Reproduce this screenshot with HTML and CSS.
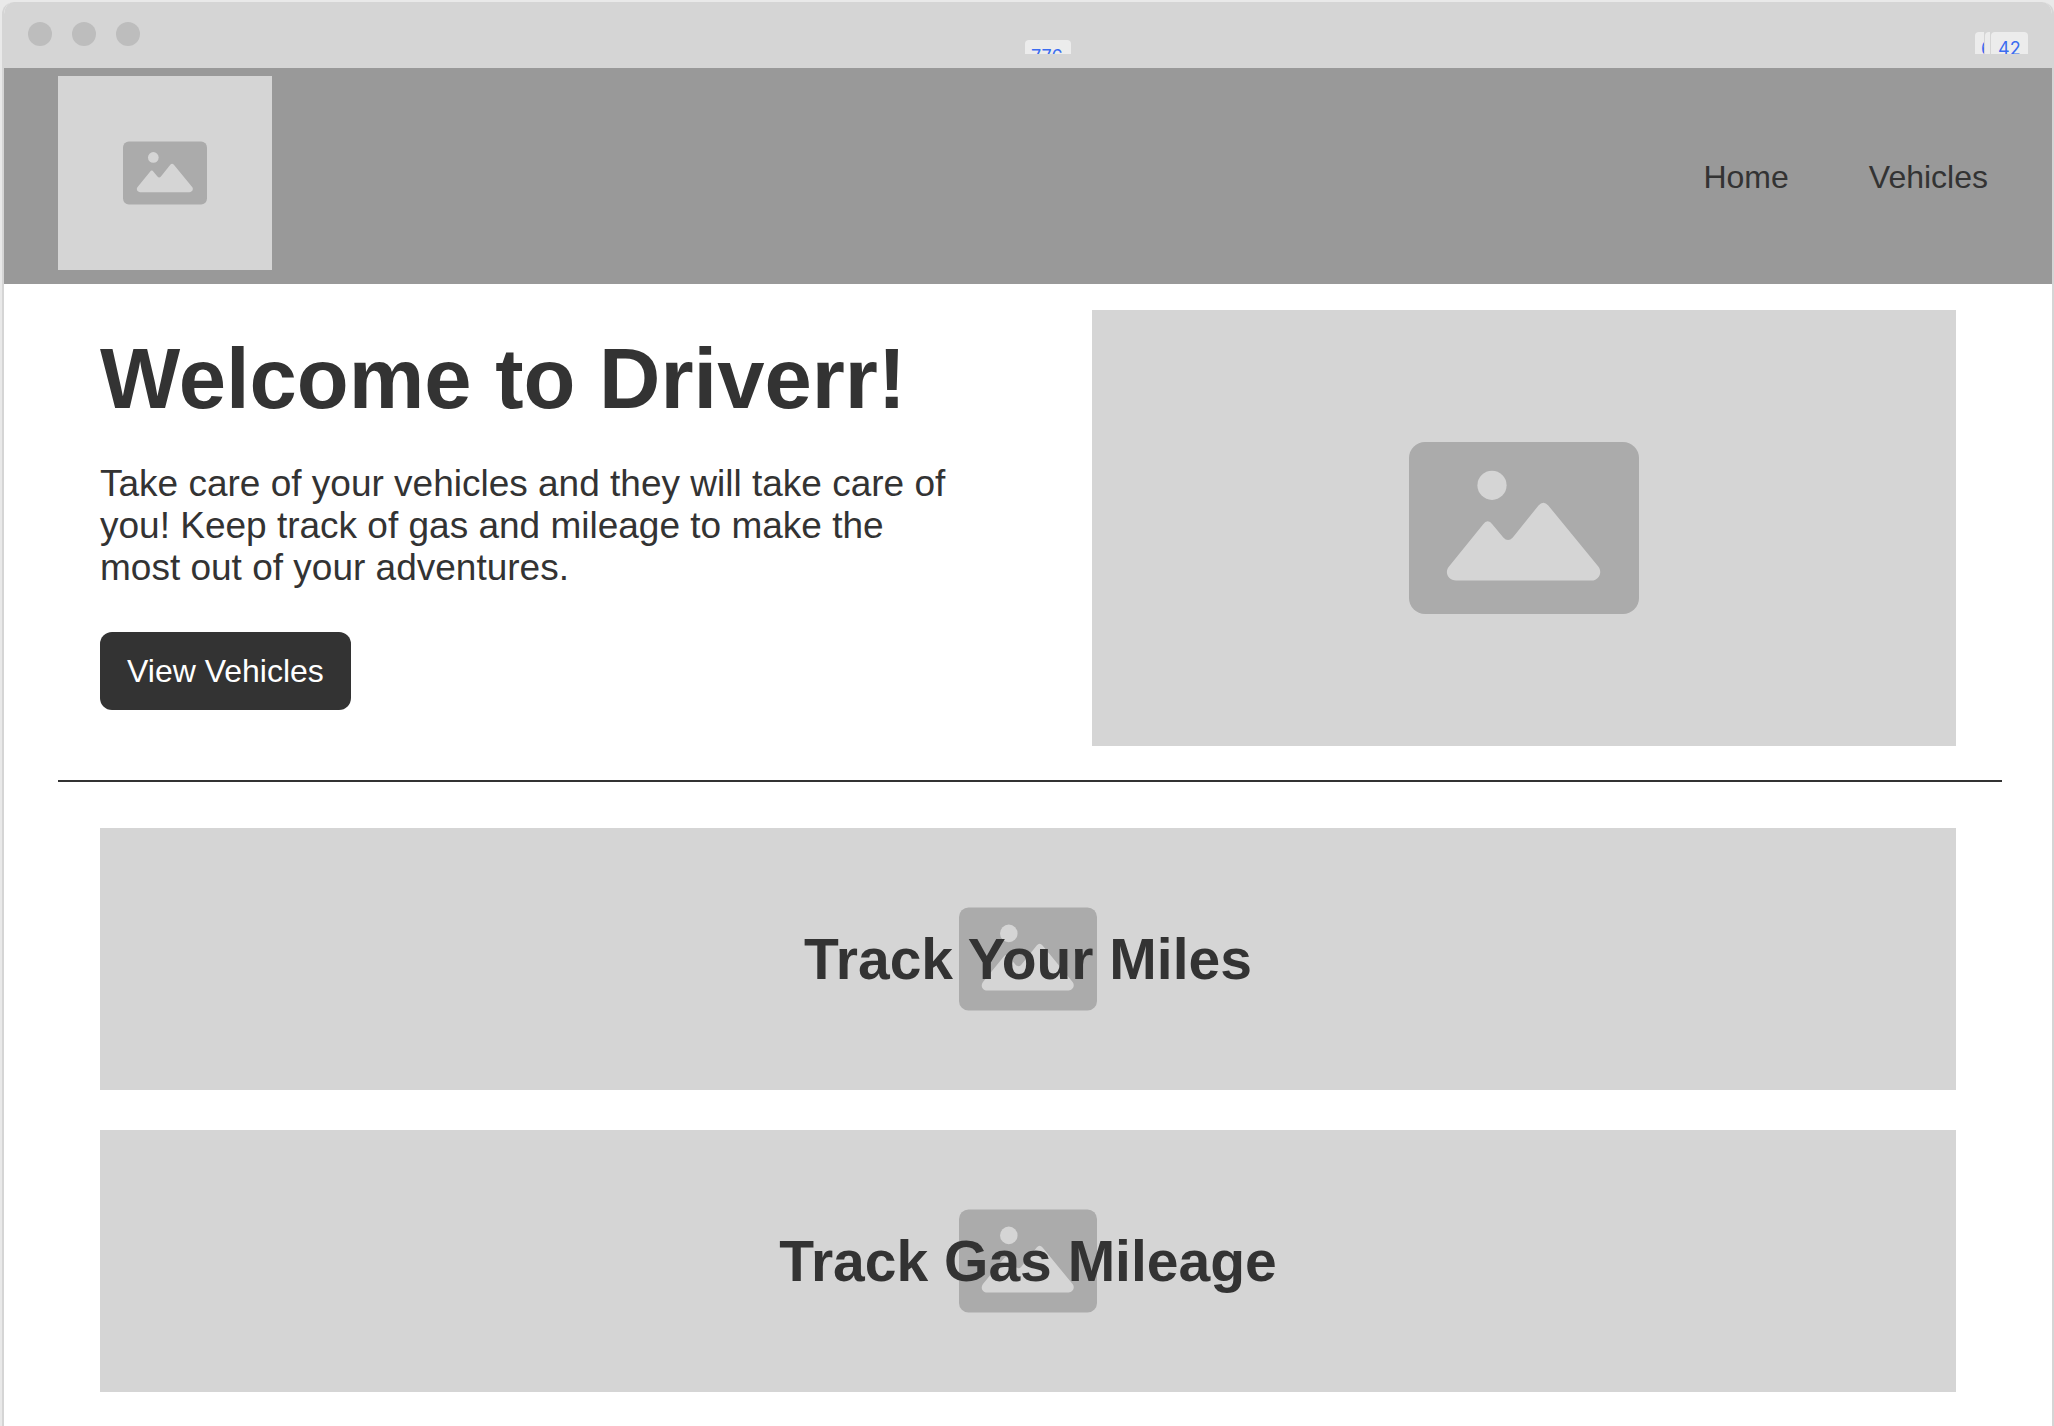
FILE: index.html
```html
<!DOCTYPE html>
<html lang="en">
<head>
<meta charset="utf-8">
<meta name="viewport" content="width=device-width, initial-scale=1">
<title>Driverr</title>
<link rel="stylesheet" href="styles.css">
</head>
<body>
<svg class="defs" aria-hidden="true">
  <symbol id="picture" viewBox="0 0 230 172">
    <rect width="230" height="172" rx="16" fill="#ababab"/>
    <circle cx="83" cy="43.3" r="14.6" fill="#d5d5d5"/>
    <path fill="#d5d5d5" d="M40 124.500 L74 82.500 Q78.700 76 83.500 82.500 L94.300 95.500 Q99 100.500 103.800 95.500 L129.500 63.500 Q134.300 58 139.300 63.500 L189.300 124.500 C194 130.500 189.500 138.500 182.500 138.500 L47 138.500 C39.500 138.500 35 130.500 40 124.500 Z"/>
  </symbol>
</svg>
<div class="window">
  <div class="titlebar">
    <span class="dot"></span><span class="dot"></span><span class="dot"></span>
    <div class="measures">
      <span class="measure measure-center">776</span>
      <span class="measure measure-first">64</span>
      <span class="measure measure-second"></span>
      <span class="measure measure-last">42</span>
    </div>
  </div>
  <header class="header">
    <div class="logo"><svg class="logo-icon" role="img" aria-label="Logo"><use href="#picture"/></svg></div>
    <nav class="nav">
      <a href="#home">Home</a>
      <a href="#vehicles">Vehicles</a>
    </nav>
  </header>
  <main>
    <section class="hero">
      <div class="intro">
        <h1>Welcome to Driverr!</h1>
        <p>Take care of your vehicles and they will take care of you! Keep track of gas and mileage to make the most out of your adventures.</p>
        <button class="action" type="button">View Vehicles</button>
      </div>
      <div class="hero-picture"><svg class="hero-icon" aria-hidden="true"><use href="#picture"/></svg></div>
    </section>
    <hr class="divider">
    <section class="features">
      <article class="feature">
        <svg class="feature-icon" aria-hidden="true"><use href="#picture"/></svg>
        <h2>Track Your Miles</h2>
      </article>
      <article class="feature">
        <svg class="feature-icon" aria-hidden="true"><use href="#picture"/></svg>
        <h2>Track Gas Mileage</h2>
      </article>
    </section>
  </main>
</div>
</body>
</html>
```
FILE: styles.css
```css
* {
  box-sizing: border-box;
}

body {
  margin: 0;
  padding: 2px 0 0 2px;
  background: #e9e9e9;
  color: #333;
  font-family: "Liberation Sans", Arial, sans-serif;
}

h1,
h2,
p {
  margin: 0;
}

.defs {
  display: none;
}

.window {
  min-height: calc(100vh - 2px);
  border: 2px solid #d5d5d5;
  border-width: 0 2px;
  border-radius: 12px 12px 0 0;
  background: #fff;
  overflow: hidden;
}

.titlebar {
  position: relative;
  display: flex;
  align-items: center;
  gap: 20px;
  height: 66px;
  padding: 0 24px 2px;
  background: #d5d5d5;
}

.dot {
  width: 24px;
  height: 24px;
  border-radius: 50%;
  background: #bdbdbd;
}

/* Spacing labels lie over the title bar and are cut off at its inner edge. */
.measures {
  position: absolute;
  inset: 0 0 14px;
  overflow: hidden;
}

.measure {
  position: absolute;
  top: 30px;
  height: 30px;
  padding: 0 6px;
  border-radius: 4px;
  background: #ececec;
  color: #3b6cf0;
  font: 18px/34px Inter, sans-serif;
  overflow: hidden;
}

.measure-center {
  top: 38px;
  left: calc(50% - 3px);
  width: 46px;
}

.measure-first {
  right: 68px;
  width: 9px;
  padding-right: 0;
  border-radius: 4px 0 0;
}

.measure-second {
  right: 62px;
  width: 5px;
  padding: 0;
  border-radius: 4px 0 0;
}

.measure-last {
  right: 24px;
  width: 37px;
  padding: 0 7px;
}

.header {
  display: flex;
  align-items: center;
  justify-content: space-between;
  padding: 8px 64px 14px 54px;
  background: #999;
}

.logo {
  display: grid;
  place-items: center;
  width: 214px;
  height: 194px;
  background: #d5d5d5;
}

.logo-icon {
  width: 84px;
  height: 64px;
}

.nav {
  display: flex;
  gap: 80px;
  padding-top: 8px;
  font-size: 32px;
}

.nav a {
  color: inherit;
  text-decoration: none;
}

.hero {
  display: grid;
  grid-template-columns: 1fr 1fr;
  gap: 128px;
  padding: 26px 96px 34px;
}

.intro {
  padding-top: 20px;
}

h1 {
  font-size: 85px;
  line-height: 98px;
}

.intro p {
  margin: 35px 0 43px;
  font-size: 37px;
  line-height: 42px;
}

.action {
  height: 78px;
  padding: 0 27px;
  border: 0;
  border-radius: 12px;
  background: #333;
  color: #fff;
  font: inherit;
  font-size: 32px;
}

.hero-picture {
  display: grid;
  place-items: center;
  height: 436px;
  background: #d5d5d5;
}

.hero-icon {
  width: 230px;
  height: 172px;
}

.divider {
  height: 2px;
  margin: 0 50px 0 54px;
  border: 0;
  background: #333;
}

.features {
  display: grid;
  gap: 40px;
  padding: 46px 96px 34px;
}

.feature {
  display: grid;
  place-items: center;
  height: 262px;
  background: #d5d5d5;
}

.feature > * {
  grid-area: 1 / 1;
}

.feature-icon {
  width: 138px;
  height: 104px;
}

h2 {
  z-index: 1;
  font-size: 57px;
  line-height: 64px;
}
```
